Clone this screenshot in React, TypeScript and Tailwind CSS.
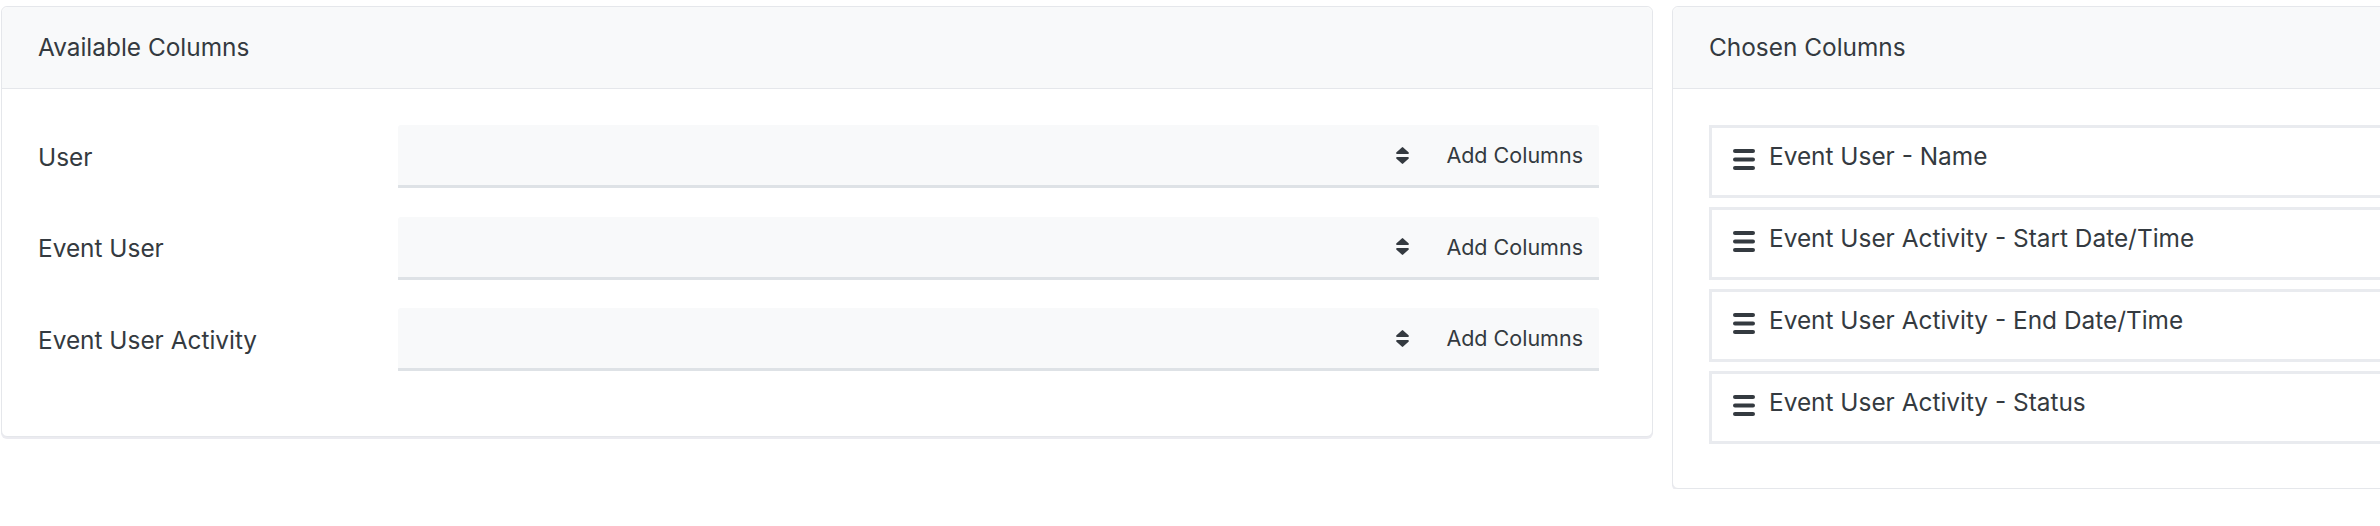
import React from 'react';

const available = ['User', 'Event User', 'Event User Activity'];

const chosen = [
  'Event User - Name',
  'Event User Activity - Start Date/Time',
  'Event User Activity - End Date/Time',
  'Event User Activity - Status',
];

const SortIcon = () => (
  <svg width="13" height="17" viewBox="0 0 13 17" className="shrink-0">
    <path d="M1.2 7h10.6c.9 0 1.4-1.1.7-1.8L7.2.4a1 1 0 0 0-1.4 0L.5 5.2C-.2 5.9.3 7 1.2 7z" fill="#343a40" />
    <path d="M1.2 10h10.6c.9 0 1.4 1.1.7 1.8l-5.3 4.8a1 1 0 0 1-1.4 0L.5 11.8C-.2 11.1.3 10 1.2 10z" fill="#343a40" />
  </svg>
);

const DragIcon = () => (
  <svg width="22" height="21" viewBox="0 0 22 21" className="shrink-0 mt-[11px]">
    <rect x="0" y="0" width="22" height="4" rx="2" fill="#343a40" />
    <rect x="0" y="8.5" width="22" height="4" rx="2" fill="#343a40" />
    <rect x="0" y="17" width="22" height="4" rx="2" fill="#343a40" />
  </svg>
);

const CardHeader: React.FC<{ title: string }> = ({ title }) => (
  <div className="h-[82px] pt-[22px] px-[36px] bg-[#f8f9fa] border-b border-[#e5e7eb] rounded-t-[6px]">
    <h3 className="text-[24.4px] leading-[36px] text-[#343a40]">{title}</h3>
  </div>
);

export default function App() {
  return (
    <div
      className="w-full overflow-hidden bg-white pt-[6px] pl-px"
      style={{ fontFamily: 'Inter, "Noto Sans", sans-serif' }}
    >
      <div className="flex items-start gap-[19px] w-[3000px]">
        {/* Available Columns */}
        <div className="w-[1652px] shrink-0 bg-white border border-[#e5e7eb] rounded-[6px] shadow-[0_2px_0_#ebebf0]">
          <CardHeader title="Available Columns" />
          <div className="pt-[36px] pb-[36px] pl-[36px] pr-[53px]">
            {available.map((label) => (
              <div key={label} className="flex items-center h-[63px] mb-[28.5px]">
                <div className="w-[360px] shrink-0 text-[24.4px] leading-[36px] text-[#343a40]">{label}</div>
                <div className="flex-1 flex h-full">
                  <div className="flex-1 flex items-center justify-end pr-[21px] bg-[#f8f9fa] border-b-[3px] border-[#dee2e6] rounded-tl-[3px]">
                    <SortIcon />
                  </div>
                  <button className="flex items-center px-[16px] bg-[#f8f9fa] border-b-[3px] border-[#dee2e6] text-[21.5px] leading-[30px] text-[#343a40] rounded-tr-[3px]">
                    Add Columns
                  </button>
                </div>
              </div>
            ))}
          </div>
        </div>

        {/* Chosen Columns */}
        <div className="w-[1000px] shrink-0 bg-white border border-[#e5e7eb] rounded-[6px] shadow-[0_2px_0_#ebebf0]">
          <CardHeader title="Chosen Columns" />
          <div className="pt-[36px] pb-[35px] px-[36px]">
            {chosen.map((item) => (
              <div
                key={item}
                className="flex items-start gap-[14px] mb-[9px] border-[3px] border-[#e9ebef] pl-[21px] pt-[10px] pb-[21px] cursor-move"
              >
                <DragIcon />
                <span className="text-[24.4px] leading-[36px] text-[#343a40]">{item}</span>
              </div>
            ))}
          </div>
        </div>
      </div>
    </div>
  );
}
